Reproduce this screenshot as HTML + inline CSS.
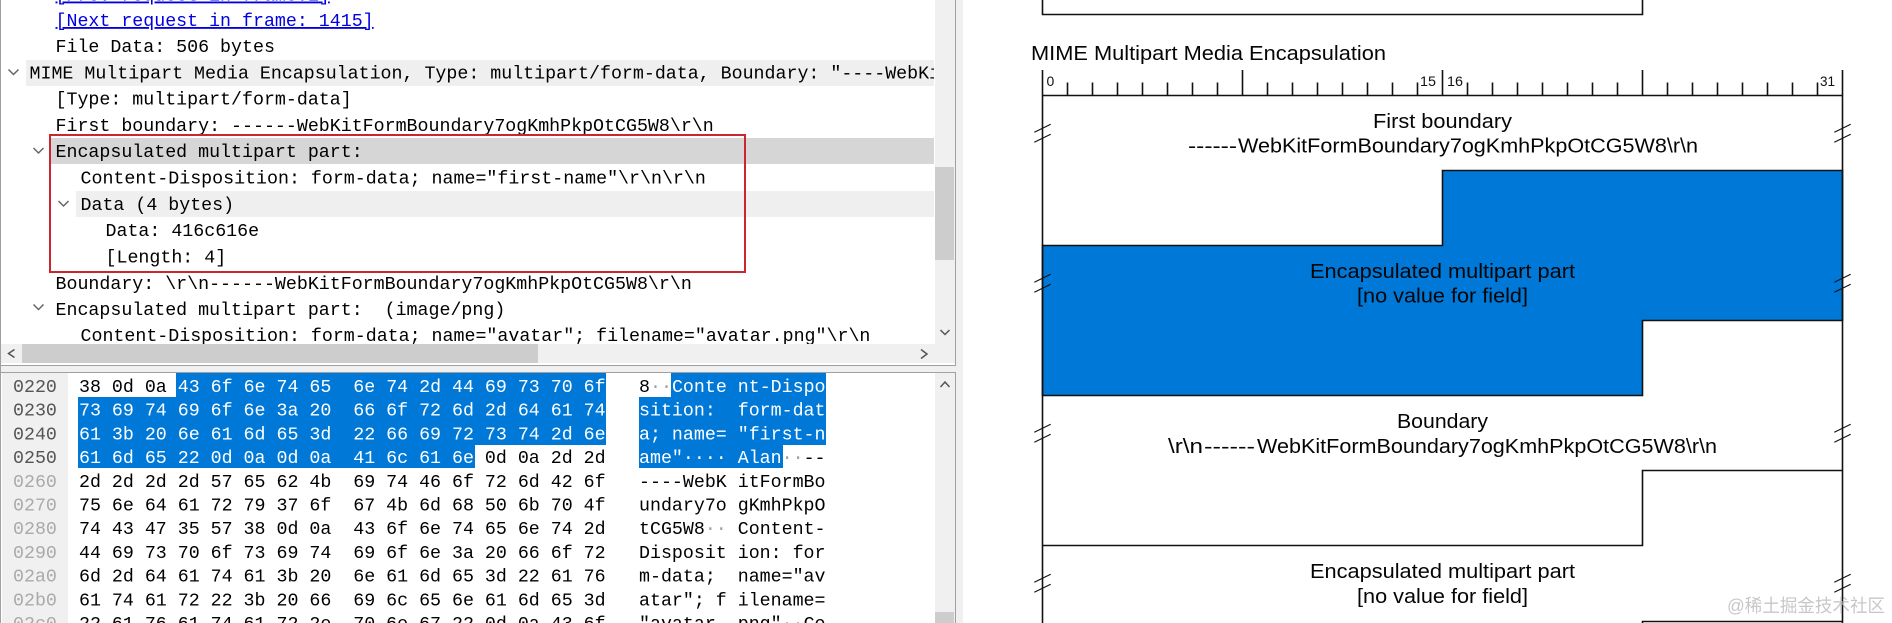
<!DOCTYPE html>
<html><head><meta charset="utf-8"><title>Wireshark MIME Multipart</title>
<style>
html,body{margin:0;padding:0;background:#fff;width:1892px;height:623px;overflow:hidden}
svg{display:block}
text{white-space:pre}
.m{font-family:"Liberation Mono","DejaVu Sans Mono",monospace;font-size:18.3px;fill:#000}
.s{font-family:"Liberation Sans",Arial,sans-serif;font-size:20px;fill:#050505}
.r{font-family:"Liberation Sans",Arial,sans-serif;font-size:14px;fill:#111}
.w{fill:#fff}
.o{fill:#555}
.l{fill:#aaa}
.d{fill:#a0a0a0}
.ch{fill:none;stroke:#666;stroke-width:1.5}
.st{fill:none;stroke:#111;stroke-width:1.6}
.bk{fill:none;stroke:#111;stroke-width:1.1}
</style></head><body>
<svg xmlns="http://www.w3.org/2000/svg" width="1892" height="623" viewBox="0 0 1892 623" xml:space="preserve">
<defs><clipPath id="t"><rect x="0" y="0" width="934" height="344"/></clipPath></defs>
<rect width="1892" height="623" fill="#fff"/>

<!-- pane backgrounds -->
<rect x="956" y="0" width="7" height="623" fill="#f0f0f0"/>
<rect x="0" y="366" width="956" height="6" fill="#f0f0f0"/>
<rect x="2" y="373" width="66" height="250" fill="#f0f0f0"/>

<!-- tree -->
<rect x="26" y="60" width="908" height="26" fill="#efefef"/>
<rect x="50" y="138" width="884" height="26" fill="#d6d6d6"/>
<rect x="76" y="191" width="858" height="26" fill="#efefef"/>
<g clip-path="url(#t)">
<g transform="translate(-0.5,0)">
<text class="m" x="56" y="0.500" style="fill:#0000e0" text-decoration="underline">[Prev request in frame:1]</text>
<text class="m" x="56" y="26" style="fill:#0000e0" text-decoration="underline">[Next request in frame: 1415]</text>
<text class="m" x="56" y="52.2">File Data: 506 bytes</text>
<text class="m" x="30" y="78.4">MIME Multipart Media Encapsulation, Type: multipart/form-data, Boundary: "----WebKitFormBoundary7ogKmhPkpOtCG5W8"</text>
<text class="m" x="56" y="104.6">[Type: multipart/form-data]</text>
<text class="m" x="56" y="131">First boundary: ------WebKitFormBoundary7ogKmhPkpOtCG5W8\r\n</text>
<text class="m" x="56" y="157.2">Encapsulated multipart part:</text>
<text class="m" x="81" y="183.4">Content-Disposition: form-data; name="first-name"\r\n\r\n</text>
<text class="m" x="81" y="210">Data (4 bytes)</text>
<text class="m" x="106" y="236.2">Data: 416c616e</text>
<text class="m" x="106" y="262.4">[Length: 4]</text>
<text class="m" x="56" y="288.8">Boundary: \r\n------WebKitFormBoundary7ogKmhPkpOtCG5W8\r\n</text>
<text class="m" x="56" y="315">Encapsulated multipart part:  (image/png)</text>
<text class="m" x="81" y="341.2">Content-Disposition: form-data; name="avatar"; filename="avatar.png"\r\n</text>
</g>
</g>
<path class="ch" d="M8.5 69.5l5 5 5-5M33.5 148l5 5 5-5M58.5 201l5 5 5-5M33.5 304.5l5 5 5-5"/>

<!-- red rect -->
<rect x="50" y="135" width="695" height="137" fill="none" stroke="#c9272d" stroke-width="2"/>

<!-- scrollbars -->
<rect x="935" y="0" width="20" height="344" fill="#f0f0f0"/>
<rect x="935" y="167" width="19" height="93" fill="#cdcdcd"/>
<rect x="0" y="344" width="955" height="19" fill="#f0f0f0"/>
<rect x="22" y="344" width="516" height="19" fill="#cdcdcd"/>
<rect x="935" y="373" width="20" height="250" fill="#f0f0f0"/>
<rect x="935" y="612" width="19" height="11" fill="#cdcdcd"/>
<path class="ch" d="M940.5 330l4.5 4.5 4.5-4.5M940.5 387l4.5-5 4.5 5M14.500 349.500l-6 4 6 4M921 349.500l6 4.500-6 4.500" style="stroke:#555"/>

<!-- pane borders -->
<rect x="0" y="0" width="1" height="623" fill="#a0a0a0"/>
<rect x="955" y="0" width="1" height="366" fill="#a0a0a0"/>
<rect x="955" y="372" width="1" height="251" fill="#a0a0a0"/>
<rect x="0" y="365" width="956" height="1" fill="#a0a0a0"/>
<rect x="0" y="372" width="956" height="1" fill="#a0a0a0"/>

<!-- hex selection -->
<path d="M176 373H606V445H475V468H78V397H176Z" fill="#0078d7"/>
<path d="M671 373H826V445H783V468H639V397H671Z" fill="#0078d7"/>

<!-- hex rows -->
<text class="m o" x="13" y="392">0220</text>
<text class="m" x="79" y="392">38 0d 0a <tspan class="w">43 6f 6e 74 65  6e 74 2d 44 69 73 70 6f</tspan></text>
<text class="m" x="639" y="392">8<tspan class="d">··</tspan><tspan class="w">Conte nt-Dispo</tspan></text>

<text class="m o" x="13" y="415.700">0230</text>
<text class="m w" x="79" y="415.700">73 69 74 69 6f 6e 3a 20  66 6f 72 6d 2d 64 61 74</text>
<text class="m w" x="639" y="415.700">sition:  form-dat</text>

<text class="m o" x="13" y="439.400">0240</text>
<text class="m w" x="79" y="439.400">61 3b 20 6e 61 6d 65 3d  22 66 69 72 73 74 2d 6e</text>
<text class="m w" x="639" y="439.400">a; name= "first-n</text>

<text class="m o" x="13" y="463.100">0250</text>
<text class="m" x="79" y="463.100"><tspan class="w">61 6d 65 22 0d 0a 0d 0a  41 6c 61 6e</tspan> 0d 0a 2d 2d</text>
<text class="m" x="639" y="463.100"><tspan class="w">ame"···· Alan</tspan><tspan class="d">··</tspan>--</text>

<text class="m l" x="13" y="486.800">0260</text>
<text class="m" x="79" y="486.800">2d 2d 2d 2d 57 65 62 4b  69 74 46 6f 72 6d 42 6f</text>
<text class="m" x="639" y="486.800">----WebK itFormBo</text>

<text class="m l" x="13" y="510.500">0270</text>
<text class="m" x="79" y="510.500">75 6e 64 61 72 79 37 6f  67 4b 6d 68 50 6b 70 4f</text>
<text class="m" x="639" y="510.500">undary7o gKmhPkpO</text>

<text class="m l" x="13" y="534.200">0280</text>
<text class="m" x="79" y="534.200">74 43 47 35 57 38 0d 0a  43 6f 6e 74 65 6e 74 2d</text>
<text class="m" x="639" y="534.200">tCG5W8<tspan class="d">··</tspan> Content-</text>

<text class="m l" x="13" y="557.900">0290</text>
<text class="m" x="79" y="557.900">44 69 73 70 6f 73 69 74  69 6f 6e 3a 20 66 6f 72</text>
<text class="m" x="639" y="557.900">Disposit ion: for</text>

<text class="m l" x="13" y="581.600">02a0</text>
<text class="m" x="79" y="581.600">6d 2d 64 61 74 61 3b 20  6e 61 6d 65 3d 22 61 76</text>
<text class="m" x="639" y="581.600">m-data;  name="av</text>

<text class="m l" x="13" y="605.300">02b0</text>
<text class="m" x="79" y="605.300">61 74 61 72 22 3b 20 66  69 6c 65 6e 61 6d 65 3d</text>
<text class="m" x="639" y="605.300">atar"; f ilename=</text>

<text class="m l" x="13" y="629">02c0</text>
<text class="m" x="79" y="629">22 61 76 61 74 61 72 2e  70 6e 67 22 0d 0a 43 6f</text>
<text class="m" x="639" y="629">"avatar. png"<tspan class="d">··</tspan>Co</text>

<!-- diagram -->
<path class="st" d="M1042.500 0V14.500H1642.500V0"/>
<text class="s" x="1031" y="60" textLength="355" lengthAdjust="spacingAndGlyphs">MIME Multipart Media Encapsulation</text>

<!-- blue field -->
<path d="M1442.500 170.500H1842.500V320.500H1642.500V395.500H1042.500V245.500H1442.500Z" fill="#0078d7" stroke="#111" stroke-width="1.600"/>

<!-- outlines -->
<path class="st" d="M1042.500 70V623M1842.500 70V623M1042.500 95.500H1842.500"/>
<path class="st" d="M1842.500 470.500H1642.500V545.500H1042.500M1642.500 623V621.500H1842.500"/>

<!-- ruler -->
<path class="st" d="M1242.500 70V95M1442.500 70V95M1642.500 70V95"/>
<path class="st" d="M1067.500 82.500V95M1092.500 82.500V95M1117.500 82.500V95M1142.500 82.500V95M1167.500 82.500V95M1192.500 82.500V95M1217.500 82.500V95M1267.500 82.500V95M1292.500 82.500V95M1317.500 82.500V95M1342.500 82.500V95M1367.500 82.500V95M1392.500 82.500V95M1417.500 82.500V95M1467.500 82.500V95M1492.500 82.500V95M1517.500 82.500V95M1542.500 82.500V95M1567.500 82.500V95M1592.500 82.500V95M1617.500 82.500V95M1667.500 82.500V95M1692.500 82.500V95M1717.500 82.500V95M1742.500 82.500V95M1767.500 82.500V95M1792.500 82.500V95M1817.500 82.500V95"/>
<text class="r" x="1046.500" y="86">0</text>
<text class="r" x="1420" y="86" textLength="16" lengthAdjust="spacingAndGlyphs">15</text>
<text class="r" x="1447" y="86" textLength="16" lengthAdjust="spacingAndGlyphs">16</text>
<text class="r" x="1820" y="86" textLength="15" lengthAdjust="spacingAndGlyphs">31</text>

<!-- break marks -->
<path class="bk" d="M1034.300 132.300L1050.700 124.300M1034.300 142.300L1050.700 134.300M1834.300 132.300L1850.700 124.300M1834.300 142.300L1850.700 134.300"/>
<path class="bk" d="M1034.300 282.300L1050.700 274.300M1034.300 292.300L1050.700 284.300M1834.300 282.300L1850.700 274.300M1834.300 292.300L1850.700 284.300"/>
<path class="bk" d="M1034.300 432.300L1050.700 424.300M1034.300 442.300L1050.700 434.300M1834.300 432.300L1850.700 424.300M1834.300 442.300L1850.700 434.300"/>
<path class="bk" d="M1034.300 582.300L1050.700 574.300M1034.300 592.300L1050.700 584.300M1834.300 582.300L1850.700 574.300M1834.300 592.300L1850.700 584.300"/>

<!-- field labels -->
<text class="s" x="1373" y="128" textLength="139" lengthAdjust="spacingAndGlyphs">First boundary</text>
<text class="s" x="1188" y="152.500" textLength="49" lengthAdjust="spacingAndGlyphs">------</text>
<text class="s" x="1238" y="152.500" textLength="460" lengthAdjust="spacingAndGlyphs">WebKitFormBoundary7ogKmhPkpOtCG5W8\r\n</text>
<text class="s" x="1310" y="278" textLength="265" lengthAdjust="spacingAndGlyphs">Encapsulated multipart part</text>
<text class="s" x="1357" y="302.500" textLength="171" lengthAdjust="spacingAndGlyphs">[no value for field]</text>
<text class="s" x="1397" y="428" textLength="91" lengthAdjust="spacingAndGlyphs">Boundary</text>
<text class="s" x="1168" y="453" textLength="35" lengthAdjust="spacingAndGlyphs">\r\n</text>
<text class="s" x="1204" y="453" textLength="51" lengthAdjust="spacingAndGlyphs">------</text>
<text class="s" x="1257" y="453" textLength="460" lengthAdjust="spacingAndGlyphs">WebKitFormBoundary7ogKmhPkpOtCG5W8\r\n</text>
<text class="s" x="1310" y="578" textLength="265" lengthAdjust="spacingAndGlyphs">Encapsulated multipart part</text>
<text class="s" x="1357" y="603" textLength="171" lengthAdjust="spacingAndGlyphs">[no value for field]</text>

<!-- watermark -->
<text x="1727" y="612" textLength="158" lengthAdjust="spacingAndGlyphs" style="font-family:'Liberation Sans','Noto Sans CJK SC',sans-serif;font-size:18px;fill:#b4b4b4;fill-opacity:.75">@稀土掘金技术社区</text>
</svg>
</body></html>
